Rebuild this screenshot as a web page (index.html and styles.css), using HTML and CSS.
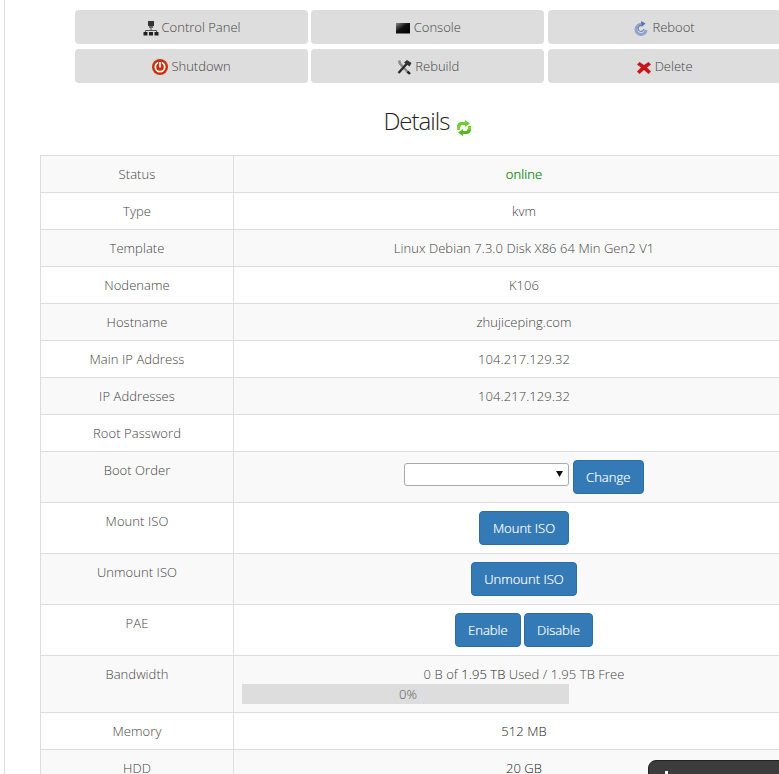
FILE: index.html
```html
<!DOCTYPE html>
<html lang="en">
<head>
<meta charset="utf-8">
<title>Details</title>
<link rel="stylesheet" href="styles.css">
</head>
<body>
<div class="page">
  <div class="actions">
    <a class="action"><svg class="ico" viewBox="0 0 16 16"><rect x="5" y="1" width="6" height="5" fill="#333"/><rect x="6" y="6" width="4" height="2" fill="#666"/><path d="M8 8v3M2.500 12v-1.500h11V12" stroke="#555" fill="none"/><rect x="0.500" y="12" width="4" height="3.500" fill="#222"/><rect x="6" y="12" width="4" height="3.500" fill="#222"/><rect x="11.500" y="12" width="4" height="3.500" fill="#222"/></svg>Control Panel</a>
    <a class="action"><svg class="ico" viewBox="0 0 16 16"><defs><linearGradient id="c" x1="0" y1="0" x2="1" y2="1"><stop offset="0" stop-color="#888"/><stop offset=".45" stop-color="#111"/><stop offset="1" stop-color="#000"/></linearGradient></defs><rect x="1" y="3" width="14" height="10.500" fill="url(#c)"/></svg>Console</a>
    <a class="action"><svg class="ico" viewBox="0 0 16 16"><path d="M8.500 4.500A5 5 0 1 0 13 10" fill="none" stroke="#8fa3d0" stroke-width="3"/><path d="M8.500 5.500A3 3 0 1 0 11 9" fill="none" stroke="#5a70a8" stroke-width="1"/><path d="M8 1l4.500 2.500L8.500 7z" fill="#5a70b5"/></svg>Reboot</a>
    <a class="action"><svg class="ico" viewBox="0 0 16 16"><circle cx="8" cy="8" r="8" fill="#c8330e"/><circle cx="8" cy="8" r="4.700" fill="none" stroke="#fff" stroke-width="1.700"/><rect x="6.200" y="2" width="3.600" height="5.500" fill="#c8330e"/><rect x="7.200" y="3" width="1.600" height="5.500" fill="#fff"/></svg>Shutdown</a>
    <a class="action"><svg class="ico" viewBox="0 0 16 16"><path d="M3 1.500l1 3 8.500 9.500" stroke="#8c8c8c" stroke-width="2.600" fill="none"/><path d="M2.500 14L11 4.500" stroke="#2a2a2a" stroke-width="2.400"/><path d="M8 3.500l3-2.500 4.500 3-2 3.500z" fill="#333"/><path d="M11.500 12.500l2.500 2.500" stroke="#222" stroke-width="2.400"/></svg>Rebuild</a>
    <a class="action"><svg class="ico" viewBox="0 0 16 16"><path d="M3.500 3L8 6l4.500-3L15 5.500 11 8.500l4 4L12.500 15 8 11l-4.500 4L1 12.500l4-4-4-3z" fill="#c8151b"/></svg>Delete</a>
  </div>
  <h2 class="title"><span class="title-text">Details</span> <svg class="refresh" viewBox="0 0 16 16"><path d="M1 7C1 3.500 2.500 2 6 2h3V0l5 3.500L9 7V5H6C5 5 4.500 5.500 4.500 7z" fill="#6fce2f"/><path d="M15 9c0 3.500-1.500 5-5 5H7v2L2 12.500 7 9v2h3c1 0 1.500-.5 1.500-2z" fill="#58b820"/><rect x="12" y="6" width="3" height="3.500" fill="#7ad63a"/><rect x="1" y="6.500" width="3" height="3.500" fill="#7ad63a"/></svg></h2>
  <table class="details">
    <tr><th>Status</th><td><span class="online">online</span></td></tr>
    <tr><th>Type</th><td>kvm</td></tr>
    <tr><th>Template</th><td>Linux Debian 7.3.0 Disk X86 64 Min Gen2 V1</td></tr>
    <tr><th>Nodename</th><td>K106</td></tr>
    <tr><th>Hostname</th><td>zhujiceping.com</td></tr>
    <tr><th>Main IP Address</th><td>104.217.129.32</td></tr>
    <tr><th>IP Addresses</th><td>104.217.129.32</td></tr>
    <tr><th>Root Password</th><td></td></tr>
    <tr><th>Boot Order</th><td><select class="select"><option></option></select> <button class="btn btn-change">Change</button></td></tr>
    <tr><th>Mount ISO</th><td><button class="btn btn-wide">Mount ISO</button></td></tr>
    <tr><th>Unmount ISO</th><td><button class="btn">Unmount ISO</button></td></tr>
    <tr><th>PAE</th><td><button class="btn">Enable</button> <button class="btn">Disable</button></td></tr>
    <tr><th>Bandwidth</th><td>0 B of <span class="strong">1.95 TB</span> Used / 1.95 TB Free<div class="progress">0%</div></td></tr>
    <tr><th>Memory</th><td><span class="strong">512 MB</span></td></tr>
    <tr><th>HDD</th><td><span class="strong">20 GB</span></td></tr>
  </table>
</div>
<div class="chat"><span class="chat-mark"></span></div>
</body>
</html>
```
FILE: styles.css
```css
html, body { margin: 0; height: 100%; overflow: hidden; background: #fff; }
body { font-family: "Open Sans", sans-serif; font-weight: 300; font-size: 13px; color: #444; }
.page { width: 811px; margin-left: 4px; border-left: 1px solid #ddd; min-height: 100%; padding-top: 10px; box-sizing: border-box; }
.actions { display: grid; grid-template-columns: repeat(3, 233px); column-gap: 3.3px; row-gap: 5px; margin-left: 70px; width: 706px; }
.action { height: 34px; background: #ddd; border-radius: 4px; display: flex; align-items: center; justify-content: center; gap: 3px; box-sizing: border-box; font-size: 13px; color: #444; }
.ico { width: 16px; height: 16px; flex: none; margin-top: 2px; }
.title { margin: 25px 0 19px; padding-left: 35px; box-sizing: border-box; text-align: center; font-size: 24px; line-height: 26px; font-weight: 300; color: #222; }
.title-text { letter-spacing: -1px; }
.refresh { width: 16px; height: 16px; vertical-align: -6px; }
.details { margin-left: 35px; width: 775px; border-collapse: collapse; table-layout: fixed; }
.details th, .details td { border: 1px solid #ddd; padding: 8px; line-height: 20px; text-align: center; font-weight: 300; vertical-align: top; letter-spacing: 0.06px; }
.details th { width: 176px; }
.details tr:nth-child(odd) { background: #f9f9f9; }
.online { color: #008000; font-weight: 300; -webkit-text-stroke: 0.2px #008000; }
.strong { color: #222; }
.select { width: 165px; height: 23px; margin-top: 3px; vertical-align: top; appearance: none; background: #fff url("data:image/svg+xml,%3Csvg xmlns='http://www.w3.org/2000/svg' width='7' height='6'%3E%3Cpath d='M0 0h7L3.500 6z' fill='%23111'/%3E%3C/svg%3E") no-repeat 151px 7px; border: 1px solid #aaa; border-radius: 3px; }
.btn { height: 34px; padding: 0 12px; font: inherit; font-weight: 300; line-height: 20px; letter-spacing: 0; color: #fff; background: #337ab7; border: 1px solid #2e6da4; border-radius: 4px; vertical-align: top; -webkit-text-stroke: 0.2px #fff; }
.btn-change { padding: 0 12.5px; }
.btn-wide { padding: 0 13px; }
.progress { width: 327px; height: 20px; background: #ddd; text-align: center; text-indent: 5px; font-size: 13px; line-height: 20px; color: #555; }
.chat { position: fixed; left: 648px; top: 760px; width: 140px; height: 30px; background: #3c3c3c; border-radius: 8px 0 0 0; border: 1px solid #222; box-sizing: border-box; }
.chat-mark { position: absolute; left: 16px; top: 10px; width: 3px; height: 5px; background: #fff; }
```
